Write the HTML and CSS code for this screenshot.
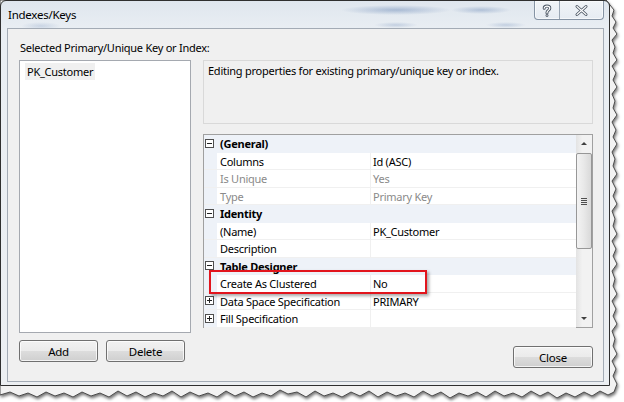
FILE: index.html
```html
<!DOCTYPE html>
<html lang="en">
<head>
  <meta charset="UTF-8">
  <title>Indexes/Keys</title>
  <link rel="stylesheet" href="styles.css">
</head>
<body>
  <div class="page">
    <!-- torn paper edge behind the window -->
    <svg class="torn" width="624" height="402" viewBox="0 0 624 402">
      <defs>
        <filter id="tornShadow" x="-5%" y="-5%" width="110%" height="110%">
          <feDropShadow dx="1" dy="2" stdDeviation="1.6" flood-color="#000" flood-opacity="0.55"/>
        </filter>
      </defs>
      <polygon class="torn-paper" filter="url(#tornShadow)" points="0,0 606,0 614,10 612,16 616,22 613,28 617,34 612,40 615,47 613,53 617,60 612,66 616,73 613,80 617,87 612,94 615,101 613,108 617,115 612,122 616,130 613,137 617,144 612,152 615,159 613,166 617,174 612,181 616,189 613,196 617,204 612,211 615,219 613,226 617,234 612,241 616,249 613,256 617,264 612,271 615,279 613,286 617,294 612,301 616,309 613,316 617,324 612,331 615,339 613,346 617,354 612,361 616,369 613,376 617,384 614,392 608,395 600,391 592,396 584,392 575,397 566,393 557,398 548,392 540,396 531,391 522,397 513,393 504,396 495,391 486,397 477,392 468,396 459,393 450,398 441,392 432,396 423,391 414,397 405,393 396,396 387,392 378,397 369,391 360,396 351,392 342,397 333,393 324,396 315,391 306,397 297,392 288,394 280,390 271,396 262,393 253,397 244,392 235,396 226,391 217,397 208,393 199,396 190,392 181,397 172,391 163,396 154,393 145,397 136,392 127,396 118,391 109,397 100,393 91,396 82,392 73,397 64,393 55,396 46,392 37,397 28,393 19,396 10,392 0,395"/>
    </svg>

    <div class="window">
      <div class="titlebar">
        <span class="title">Indexes/Keys</span>
        <div class="caption-buttons">
          <div class="cap cap-help">
            <svg width="24" height="17" viewBox="0 0 24 17">
              <path class="glyph-dark" d="M9.2,6.2 C9.2,3.4 14.8,3.4 14.8,6.2 C14.8,8.4 12,8.4 12,10.6 V11" />
              <circle class="glyph-dark-dot" cx="12" cy="13.6" r="1.4"/>
              <path class="glyph-light" d="M9.2,6.2 C9.2,3.4 14.8,3.4 14.8,6.2 C14.8,8.4 12,8.4 12,10.6 V11" />
              <circle class="glyph-light-dot" cx="12" cy="13.6" r="0.6"/>
            </svg>
          </div>
          <div class="cap cap-close">
            <svg width="43" height="17" viewBox="0 0 43 17">
              <path class="glyph-dark" d="M17,4.5 L26,12.5 M26,4.5 L17,12.5" />
              <path class="glyph-light" d="M17,4.5 L26,12.5 M26,4.5 L17,12.5" />
            </svg>
          </div>
        </div>
      </div>

      <div class="client">
        <div class="label">Selected Primary/Unique Key or Index:</div>
        <div class="main">
          <div class="left">
            <div class="listbox">
              <div class="item">PK_Customer</div>
            </div>
            <div class="buttons">
              <button type="button" class="btn">Add</button>
              <button type="button" class="btn">Delete</button>
            </div>
          </div>

          <div class="right">
            <div class="desc">Editing properties for existing primary/unique key or index.</div>

            <div class="grid">
              <div class="rows">
                <div class="row cat"><span class="gutter"><span class="exp"></span></span><span class="cat-name">(General)</span></div>
                <div class="row"><span class="gutter"></span><span class="name">Columns</span><span class="value">Id (ASC)</span></div>
                <div class="row off"><span class="gutter"></span><span class="name">Is Unique</span><span class="value">Yes</span></div>
                <div class="row off"><span class="gutter"></span><span class="name">Type</span><span class="value">Primary Key</span></div>
                <div class="row cat"><span class="gutter"><span class="exp"></span></span><span class="cat-name">Identity</span></div>
                <div class="row"><span class="gutter"></span><span class="name">(Name)</span><span class="value">PK_Customer</span></div>
                <div class="row"><span class="gutter"></span><span class="name">Description</span><span class="value"></span></div>
                <div class="row cat"><span class="gutter"><span class="exp"></span></span><span class="cat-name">Table Designer</span></div>
                <div class="row"><span class="gutter"></span><span class="name">Create As Clustered</span><span class="value">No</span></div>
                <div class="row"><span class="gutter gutter-white"><span class="exp plus"></span></span><span class="name">Data Space Specification</span><span class="value">PRIMARY</span></div>
                <div class="row"><span class="gutter gutter-white"><span class="exp plus"></span></span><span class="name">Fill Specification</span><span class="value"></span></div>
              </div>
              <div class="scrollbar">
                <div class="arrow arrow-up"></div>
                <div class="track">
                  <div class="thumb"><span class="grip"></span></div>
                </div>
                <div class="arrow arrow-down"></div>
              </div>
              <div class="callout"></div>
            </div>

            <div class="close-row">
              <button type="button" class="btn btn-close">Close</button>
            </div>
          </div>
        </div>
      </div>
    </div>
  </div>
</body>
</html>
```

FILE: styles.css
```css
body {
  margin: 0;
  background-color: #ffffff;
  font-family: "Noto Sans", "DejaVu Sans", sans-serif;
  font-size: 11px;
  letter-spacing: -0.25px;
  color: #000000;
}
.page {
  position: relative;
  width: 624px;
  height: 402px;
  overflow: hidden;
}
.torn {
  position: absolute;
  left: 0;
  top: 0;
}
.torn-paper {
  fill: #f2f2f2;
  stroke: #3c3c3c;
  stroke-width: 0.9;
}

/* window frame */
.window {
  position: relative;
  width: 608px;
  height: 384px;
  border: 1px solid #2f2f2f;
  border-radius: 6px 6px 0 0;
  display: flex;
  flex-direction: column;
  background:
    radial-gradient(ellipse 55px 5px at 395px 9px, rgba(60, 100, 160, 0.35), transparent),
    radial-gradient(ellipse 30px 4px at 480px 9px, rgba(60, 100, 160, 0.3), transparent),
    radial-gradient(ellipse 22px 3px at 395px 24px, rgba(60, 100, 160, 0.22), transparent),
    radial-gradient(ellipse 20px 3px at 505px 24px, rgba(60, 100, 160, 0.22), transparent),
    radial-gradient(ellipse 20px 4px at 40px 25px, rgba(60, 100, 160, 0.18), transparent),
    linear-gradient(#dfe6ee, #e9eef3 28px, #eceff2);
}
.titlebar {
  height: 27px;
  display: flex;
  align-items: flex-start;
  padding-left: 7px;
}
.title {
  line-height: 28px;
  font-size: 11.5px;
}
.caption-buttons {
  margin-left: auto;
  margin-right: 5px;
  display: flex;
  height: 18px;
  border: 1px solid #8593a4;
  border-top: none;
  border-radius: 0 0 4px 4px;
  background: linear-gradient(rgba(255, 255, 255, 0.55), rgba(230, 236, 243, 0.6));
  box-shadow: inset 0 0 0 1px rgba(255, 255, 255, 0.6);
}
.cap {
  height: 18px;
  display: flex;
  align-items: center;
}
.cap-help {
  width: 24px;
  border-right: 1px solid #9aa6b4;
}
.cap-close {
  width: 43px;
}
.glyph-dark {
  fill: none;
  stroke: #4a5563;
  stroke-width: 3;
  stroke-linecap: round;
}
.glyph-light {
  fill: none;
  stroke: #ffffff;
  stroke-width: 1.2;
  stroke-linecap: round;
}
.glyph-dark-dot {
  fill: #4a5563;
}
.glyph-light-dot {
  fill: #ffffff;
}

/* client area */
.client {
  flex: 1;
  margin: 0 5px 3px 6px;
  border: 1px solid #a3abb5;
  background-color: #f0f0f0;
  padding: 11px 10px 0 11px;
}
.label {
  line-height: 16px;
  padding-left: 1px;
  margin-bottom: 4px;
}
.main {
  display: flex;
  gap: 12px;
}
.left {
  width: 172px;
}
.listbox {
  height: 273px;
  box-sizing: border-box;
  border: 1px solid #a5a9b0;
  background-color: #ffffff;
  padding: 2px 0 0 5px;
}
.item {
  display: inline-block;
  background-color: #f0f0f0;
  line-height: 17px;
  padding: 0 2px;
}
.buttons {
  display: flex;
  gap: 8px;
  margin-top: 7px;
}
.btn {
  width: 79px;
  height: 22px;
  padding: 0;
  font-family: inherit;
  font-size: 11.5px;
  letter-spacing: -0.25px;
  color: #000000;
  border: 1px solid #707070;
  border-radius: 3px;
  background: linear-gradient(#f2f2f2, #ebebeb 50%, #dddddd 50%, #cfcfcf);
  box-shadow: inset 0 0 0 1px rgba(255, 255, 255, 0.75);
}
.right {
  width: 390px;
  display: flex;
  flex-direction: column;
}
.desc {
  height: 64px;
  box-sizing: border-box;
  border: 1px solid #d9d9d9;
  padding: 2px 4px;
  line-height: 16px;
}

/* property grid */
.grid {
  position: relative;
  margin-top: 10px;
  height: 194px;
  box-sizing: border-box;
  border: 1px solid #a0a0a0;
  background-color: #ffffff;
  display: flex;
}
.rows {
  flex: 1;
}
.row {
  display: flex;
  height: 17.5px;
  line-height: 17px;
  box-sizing: border-box;
  border-bottom: 1px solid #f0f0f0;
}
.row.cat {
  background-color: #eef2f8;
  border-bottom-color: #eef2f8;
}
.gutter {
  width: 13px;
  flex: none;
  background-color: #eef2f8;
  display: flex;
  align-items: center;
}
.cat-name {
  font-weight: bold;
  padding-left: 3px;
}
.name {
  width: 150px;
  flex: none;
  padding-left: 3px;
  border-right: 1px solid #f0f0f0;
  white-space: nowrap;
}
.value {
  flex: 1;
  padding-left: 2px;
}
.row.off .name,
.row.off .value {
  color: #8a8a8a;
}
.exp {
  position: relative;
  width: 9px;
  height: 9px;
  margin-left: 1px;
  box-sizing: border-box;
  border: 1px solid #4f4f4f;
  background-color: #ffffff;
}
.exp::before {
  content: "";
  position: absolute;
  left: 1px;
  top: 3px;
  width: 5px;
  height: 1px;
  background-color: #222222;
}
.exp.plus::after {
  content: "";
  position: absolute;
  left: 3px;
  top: 1px;
  width: 1px;
  height: 5px;
  background-color: #222222;
}
.scrollbar {
  width: 16px;
  flex: none;
  display: flex;
  flex-direction: column;
  background: linear-gradient(90deg, #e3e3e3, #f2f2f2 40%, #f2f2f2);
}
.arrow {
  height: 17px;
  display: flex;
  align-items: center;
  justify-content: center;
}
.arrow-up::before {
  content: "";
  border-left: 3px solid transparent;
  border-right: 3px solid transparent;
  border-bottom: 3px solid #404040;
}
.arrow-down::before {
  content: "";
  border-left: 3px solid transparent;
  border-right: 3px solid transparent;
  border-top: 3px solid #404040;
}
.track {
  flex: 1;
}
.thumb {
  margin: 1px 0 0 0;
  height: 96px;
  box-sizing: border-box;
  border: 1px solid #979797;
  border-radius: 2px;
  background: linear-gradient(90deg, #f3f3f3, #e8e8e8 50%, #d9d9d9);
  display: flex;
  align-items: center;
  justify-content: center;
}
.grip {
  width: 6px;
  height: 7px;
  background: repeating-linear-gradient(#4e4e4e 0 1px, transparent 1px 2px);
}
.callout {
  position: absolute;
  left: 5px;
  top: 135px;
  width: 218px;
  height: 24px;
  box-sizing: border-box;
  border: 2px solid #e2151d;
  box-shadow: 2px 2px 3px rgba(0, 0, 0, 0.35);
}
.close-row {
  display: flex;
  justify-content: flex-end;
  margin-top: 18px;
}
.btn-close {
  width: 80px;
}
```
